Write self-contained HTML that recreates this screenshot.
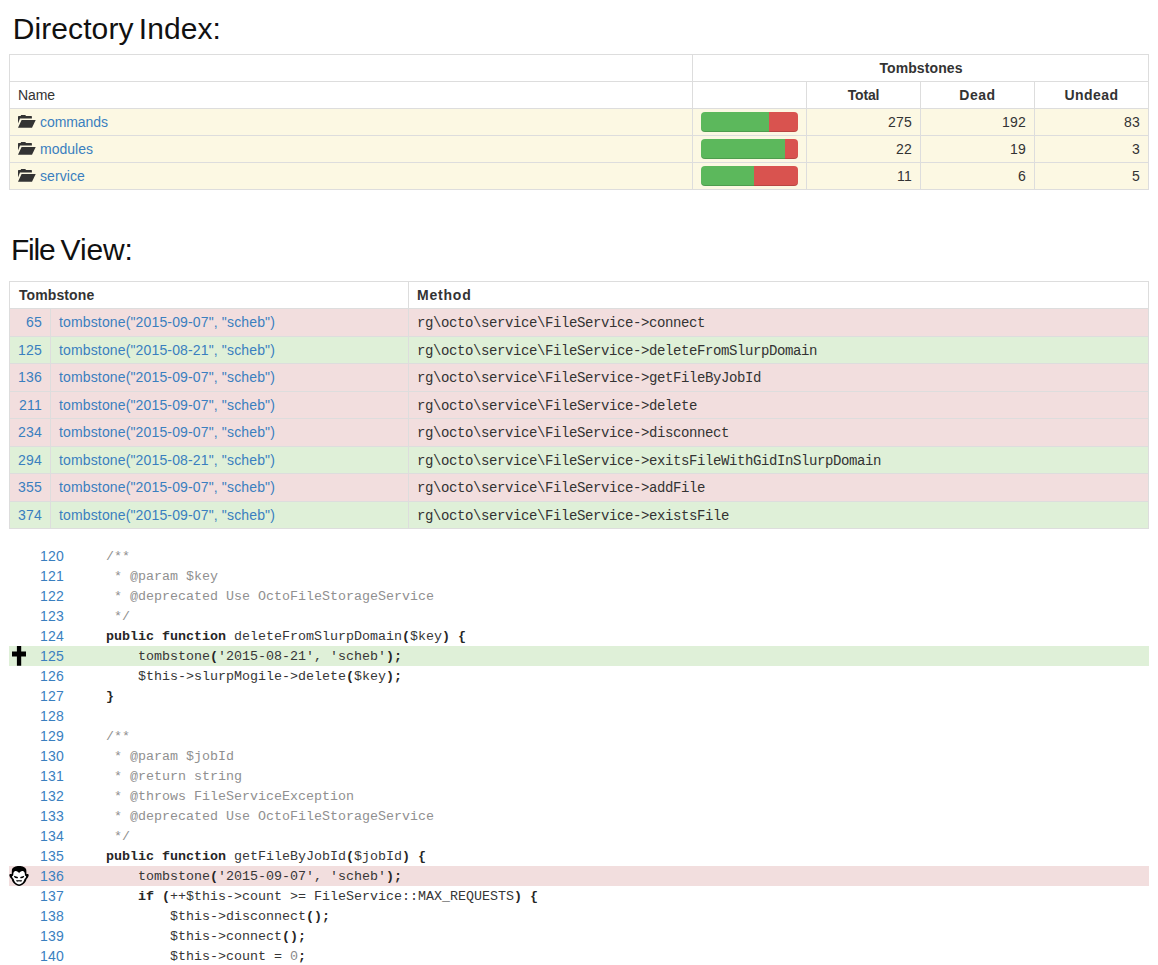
<!DOCTYPE html>
<html><head><meta charset="utf-8"><title>Tombstones</title>
<style>
html,body{margin:0;padding:0;background:#fff;}
body{width:1158px;height:965px;position:relative;overflow:hidden;font-family:"Liberation Sans",sans-serif;font-size:14px;line-height:20px;color:#333;}
.a{position:absolute;white-space:pre;}
.h{position:absolute;font-size:30px;line-height:36px;color:#111;white-space:pre;transform-origin:0 0;}
.hl{position:absolute;height:1px;background:#ddd;}
.vl{position:absolute;width:1px;background:#ddd;}
.bg{position:absolute;}
.b{font-weight:bold;}
.r{text-align:right;}
.c{text-align:center;}
.lk{color:#3a7fbf;}
.pb{position:absolute;height:20px;width:97px;display:flex;}
.pb i{display:block;height:20px;background:#5cb85c;box-shadow:inset 0 -1px 0 rgba(0,0,0,.15);border-radius:4px 0 0 4px;flex:none;}
.pb u{display:block;height:20px;background:#d9534f;box-shadow:inset 0 -1px 0 rgba(0,0,0,.15);border-radius:0 4px 4px 0;flex:1;}
.m{font-family:"Liberation Mono",monospace;font-size:14px;letter-spacing:-0.4px;color:#333;}
.ln{position:absolute;left:20px;width:44px;text-align:right;color:#3a7fbf;height:20px;}
.cd{position:absolute;left:74px;font-family:"Liberation Mono",monospace;font-size:12px;transform:scaleX(1.11111);transform-origin:0 0;line-height:20px;height:20px;white-space:pre;color:#363636;}
.cd b{color:#262626;}
.cd i{font-style:normal;color:#8a8a8a;}
.cm{color:#909090;}
svg{position:absolute;overflow:visible;}
</style></head><body>

<div class="h" style="left:12.8px;top:10.5px;letter-spacing:0.08px;">Directory</div>
<div class="h" style="left:138.8px;top:10.5px;letter-spacing:0.07px;">Index:</div>
<div class="h" style="left:10.9px;top:231.5px;letter-spacing:-1.2px;">File</div>
<div class="h" style="left:60.6px;top:231.5px;letter-spacing:-0.15px;">View:</div>
<div class="bg" style="left:9px;top:108px;width:1140px;height:81px;background:#fcf8e3;"></div>
<div class="hl" style="left:9px;top:54px;width:1140px;"></div>
<div class="hl" style="left:9px;top:81px;width:1140px;"></div>
<div class="hl" style="left:9px;top:108px;width:1140px;"></div>
<div class="hl" style="left:9px;top:135px;width:1140px;"></div>
<div class="hl" style="left:9px;top:162px;width:1140px;"></div>
<div class="hl" style="left:9px;top:189px;width:1140px;"></div>
<div class="vl" style="left:9px;top:54px;height:136px;"></div>
<div class="vl" style="left:1148px;top:54px;height:136px;"></div>
<div class="vl" style="left:692px;top:54px;height:136px;"></div>
<div class="vl" style="left:806px;top:81px;height:109px;"></div>
<div class="vl" style="left:920px;top:81px;height:109px;"></div>
<div class="vl" style="left:1034px;top:81px;height:109px;"></div>
<div class="a b c" style="left:693.5px;top:58px;letter-spacing:0.100px;width:455px;">Tombstones</div>
<div class="a " style="left:18px;top:85px;letter-spacing:-0.086px;">Name</div>
<div class="a b c" style="left:807px;top:85px;letter-spacing:-0.200px;width:113px;">Total</div>
<div class="a b c" style="left:921px;top:85px;letter-spacing:0.530px;width:113px;">Dead</div>
<div class="a b c" style="left:1035px;top:85px;letter-spacing:0.460px;width:113px;">Undead</div>
<svg style="left:18px;top:115px;" width="18" height="13" viewBox="0 0 18 13"><path fill="#333" d="M0,1.7 Q0,1 .7,1 L2.6,1 L3.1,0 L7.4,0 L7.9,1 L13.3,1 Q13.9,1 13.9,1.6 L13.9,3.6 L2,3.6 L0,8.6 Z"/><path fill="#333" d="M3.6,5 L17.7,5 L14,12.8 L0,12.8 Z"/></svg>
<div class="a lk" style="left:40px;top:112px;letter-spacing:-0.059px;">commands</div>
<div class="pb" style="left:701px;top:112px;"><i style="width:69.82%"></i><u></u></div>
<div class="a r" style="left:807px;top:112px;letter-spacing:0.214px;width:105px;">275</div>
<div class="a r" style="left:921px;top:112px;letter-spacing:0.214px;width:105px;">192</div>
<div class="a r" style="left:1035px;top:112px;letter-spacing:0.214px;width:105px;">83</div>
<svg style="left:18px;top:142px;" width="18" height="13" viewBox="0 0 18 13"><path fill="#333" d="M0,1.7 Q0,1 .7,1 L2.6,1 L3.1,0 L7.4,0 L7.9,1 L13.3,1 Q13.9,1 13.9,1.6 L13.9,3.6 L2,3.6 L0,8.6 Z"/><path fill="#333" d="M3.6,5 L17.7,5 L14,12.8 L0,12.8 Z"/></svg>
<div class="a lk" style="left:40px;top:139px;letter-spacing:0.012px;">modules</div>
<div class="pb" style="left:701px;top:139px;"><i style="width:86.36%"></i><u></u></div>
<div class="a r" style="left:807px;top:139px;letter-spacing:0.214px;width:105px;">22</div>
<div class="a r" style="left:921px;top:139px;letter-spacing:0.214px;width:105px;">19</div>
<div class="a r" style="left:1035px;top:139px;letter-spacing:0.214px;width:105px;">3</div>
<svg style="left:18px;top:169px;" width="18" height="13" viewBox="0 0 18 13"><path fill="#333" d="M0,1.7 Q0,1 .7,1 L2.6,1 L3.1,0 L7.4,0 L7.9,1 L13.3,1 Q13.9,1 13.9,1.6 L13.9,3.6 L2,3.6 L0,8.6 Z"/><path fill="#333" d="M3.6,5 L17.7,5 L14,12.8 L0,12.8 Z"/></svg>
<div class="a lk" style="left:40px;top:166px;letter-spacing:0.094px;">service</div>
<div class="pb" style="left:701px;top:166px;"><i style="width:54.55%"></i><u></u></div>
<div class="a r" style="left:807px;top:166px;letter-spacing:0.214px;width:105px;">11</div>
<div class="a r" style="left:921px;top:166px;letter-spacing:0.214px;width:105px;">6</div>
<div class="a r" style="left:1035px;top:166px;letter-spacing:0.214px;width:105px;">5</div>
<div class="bg" style="left:9px;top:308px;width:1140px;height:28px;background:#f2dede;"></div>
<div class="bg" style="left:9px;top:336px;width:1140px;height:27px;background:#dff0d8;"></div>
<div class="bg" style="left:9px;top:363px;width:1140px;height:28px;background:#f2dede;"></div>
<div class="bg" style="left:9px;top:391px;width:1140px;height:27px;background:#f2dede;"></div>
<div class="bg" style="left:9px;top:418px;width:1140px;height:28px;background:#f2dede;"></div>
<div class="bg" style="left:9px;top:446px;width:1140px;height:27px;background:#dff0d8;"></div>
<div class="bg" style="left:9px;top:473px;width:1140px;height:28px;background:#f2dede;"></div>
<div class="bg" style="left:9px;top:501px;width:1140px;height:27px;background:#dff0d8;"></div>
<div class="hl" style="left:9px;top:281px;width:1140px;"></div>
<div class="hl" style="left:9px;top:308px;width:1140px;"></div>
<div class="hl" style="left:9px;top:336px;width:1140px;"></div>
<div class="hl" style="left:9px;top:363px;width:1140px;"></div>
<div class="hl" style="left:9px;top:391px;width:1140px;"></div>
<div class="hl" style="left:9px;top:418px;width:1140px;"></div>
<div class="hl" style="left:9px;top:446px;width:1140px;"></div>
<div class="hl" style="left:9px;top:473px;width:1140px;"></div>
<div class="hl" style="left:9px;top:501px;width:1140px;"></div>
<div class="hl" style="left:9px;top:528px;width:1140px;"></div>
<div class="vl" style="left:9px;top:281px;height:248px;"></div>
<div class="vl" style="left:1148px;top:281px;height:248px;"></div>
<div class="vl" style="left:408px;top:281px;height:248px;"></div>
<div class="vl" style="left:50px;top:308px;height:221px;"></div>
<div class="a b" style="left:19px;top:285px;letter-spacing:0.100px;">Tombstone</div>
<div class="a b" style="left:417px;top:285px;letter-spacing:0.800px;">Method</div>
<div class="a r lk" style="left:10px;top:312px;letter-spacing:0.214px;width:32px;">65</div>
<div class="a lk" style="left:59px;top:312px;letter-spacing:0.146px;">tombstone(&quot;2015-09-07&quot;, &quot;scheb&quot;)</div>
<div class="a m" style="left:417px;top:313px;">rg\octo\service\FileService-&gt;connect</div>
<div class="a r lk" style="left:10px;top:340px;letter-spacing:0.214px;width:32px;">125</div>
<div class="a lk" style="left:59px;top:340px;letter-spacing:0.146px;">tombstone(&quot;2015-08-21&quot;, &quot;scheb&quot;)</div>
<div class="a m" style="left:417px;top:341px;">rg\octo\service\FileService-&gt;deleteFromSlurpDomain</div>
<div class="a r lk" style="left:10px;top:367px;letter-spacing:0.214px;width:32px;">136</div>
<div class="a lk" style="left:59px;top:367px;letter-spacing:0.146px;">tombstone(&quot;2015-09-07&quot;, &quot;scheb&quot;)</div>
<div class="a m" style="left:417px;top:368px;">rg\octo\service\FileService-&gt;getFileByJobId</div>
<div class="a r lk" style="left:10px;top:395px;letter-spacing:0.214px;width:32px;">211</div>
<div class="a lk" style="left:59px;top:395px;letter-spacing:0.146px;">tombstone(&quot;2015-09-07&quot;, &quot;scheb&quot;)</div>
<div class="a m" style="left:417px;top:396px;">rg\octo\service\FileService-&gt;delete</div>
<div class="a r lk" style="left:10px;top:422px;letter-spacing:0.214px;width:32px;">234</div>
<div class="a lk" style="left:59px;top:422px;letter-spacing:0.146px;">tombstone(&quot;2015-09-07&quot;, &quot;scheb&quot;)</div>
<div class="a m" style="left:417px;top:423px;">rg\octo\service\FileService-&gt;disconnect</div>
<div class="a r lk" style="left:10px;top:450px;letter-spacing:0.214px;width:32px;">294</div>
<div class="a lk" style="left:59px;top:450px;letter-spacing:0.146px;">tombstone(&quot;2015-08-21&quot;, &quot;scheb&quot;)</div>
<div class="a m" style="left:417px;top:451px;">rg\octo\service\FileService-&gt;exitsFileWithGidInSlurpDomain</div>
<div class="a r lk" style="left:10px;top:477px;letter-spacing:0.214px;width:32px;">355</div>
<div class="a lk" style="left:59px;top:477px;letter-spacing:0.146px;">tombstone(&quot;2015-09-07&quot;, &quot;scheb&quot;)</div>
<div class="a m" style="left:417px;top:478px;">rg\octo\service\FileService-&gt;addFile</div>
<div class="a r lk" style="left:10px;top:505px;letter-spacing:0.214px;width:32px;">374</div>
<div class="a lk" style="left:59px;top:505px;letter-spacing:0.146px;">tombstone(&quot;2015-09-07&quot;, &quot;scheb&quot;)</div>
<div class="a m" style="left:417px;top:506px;">rg\octo\service\FileService-&gt;existsFile</div>
<div class="bg" style="left:9px;top:646px;width:1140px;height:20px;background:#dff0d8;"></div>
<div class="bg" style="left:9px;top:866px;width:1140px;height:20px;background:#f2dede;"></div>
<div class="ln" style="top:546px;letter-spacing:0.214px;">120</div>
<div class="cd" style="top:547px;"><span class="cm">    /**</span></div>
<div class="ln" style="top:566px;letter-spacing:0.214px;">121</div>
<div class="cd" style="top:567px;"><span class="cm">     * @param $key</span></div>
<div class="ln" style="top:586px;letter-spacing:0.214px;">122</div>
<div class="cd" style="top:587px;"><span class="cm">     * @deprecated Use OctoFileStorageService</span></div>
<div class="ln" style="top:606px;letter-spacing:0.214px;">123</div>
<div class="cd" style="top:607px;"><span class="cm">     */</span></div>
<div class="ln" style="top:626px;letter-spacing:0.214px;">124</div>
<div class="cd" style="top:627px;">    <b>public function</b> deleteFromSlurpDomain<b>(</b>$key<b>) {</b></div>
<div class="ln" style="top:646px;letter-spacing:0.214px;">125</div>
<div class="cd" style="top:647px;">        tombstone<b>(</b>'2015-08-21', 'scheb'<b>);</b></div>
<div class="ln" style="top:666px;letter-spacing:0.214px;">126</div>
<div class="cd" style="top:667px;">        $this-&gt;slurpMogile-&gt;delete<b>(</b>$key<b>);</b></div>
<div class="ln" style="top:686px;letter-spacing:0.214px;">127</div>
<div class="cd" style="top:687px;">    <b>}</b></div>
<div class="ln" style="top:706px;letter-spacing:0.214px;">128</div>
<div class="ln" style="top:726px;letter-spacing:0.214px;">129</div>
<div class="cd" style="top:727px;"><span class="cm">    /**</span></div>
<div class="ln" style="top:746px;letter-spacing:0.214px;">130</div>
<div class="cd" style="top:747px;"><span class="cm">     * @param $jobId</span></div>
<div class="ln" style="top:766px;letter-spacing:0.214px;">131</div>
<div class="cd" style="top:767px;"><span class="cm">     * @return string</span></div>
<div class="ln" style="top:786px;letter-spacing:0.214px;">132</div>
<div class="cd" style="top:787px;"><span class="cm">     * @throws FileServiceException</span></div>
<div class="ln" style="top:806px;letter-spacing:0.214px;">133</div>
<div class="cd" style="top:807px;"><span class="cm">     * @deprecated Use OctoFileStorageService</span></div>
<div class="ln" style="top:826px;letter-spacing:0.214px;">134</div>
<div class="cd" style="top:827px;"><span class="cm">     */</span></div>
<div class="ln" style="top:846px;letter-spacing:0.214px;">135</div>
<div class="cd" style="top:847px;">    <b>public function</b> getFileByJobId<b>(</b>$jobId<b>) {</b></div>
<div class="ln" style="top:866px;letter-spacing:0.214px;">136</div>
<div class="cd" style="top:867px;">        tombstone<b>(</b>'2015-09-07', 'scheb'<b>);</b></div>
<div class="ln" style="top:886px;letter-spacing:0.214px;">137</div>
<div class="cd" style="top:887px;">        <b>if (</b>++$this-&gt;count &gt;= FileService::MAX_REQUESTS<b>) {</b></div>
<div class="ln" style="top:906px;letter-spacing:0.214px;">138</div>
<div class="cd" style="top:907px;">            $this-&gt;disconnect<b>();</b></div>
<div class="ln" style="top:926px;letter-spacing:0.214px;">139</div>
<div class="cd" style="top:927px;">            $this-&gt;connect<b>();</b></div>
<div class="ln" style="top:946px;letter-spacing:0.214px;">140</div>
<div class="cd" style="top:947px;">            $this-&gt;count = <i>0</i><b>;</b></div>
<svg style="left:12px;top:646px;" width="14" height="20" viewBox="0 0 14 20"><path fill="#000" d="M4.9,0 H9.2 V5.5 H14 V10.4 H9.2 V19.8 H4.9 V10.4 H0 V5.5 H4.9 Z"/></svg>
<svg style="left:4px;top:862px;" width="30" height="28" viewBox="0 0 1034 965">
<path fill="#000" d="M520,134 C640,134 745,175 768,265 L774,425 C800,400 852,412 852,450 C852,500 815,560 778,582 C762,650 725,705 690,745 C640,800 570,830 520,830 C470,830 400,800 350,745 C315,705 278,650 262,582 C225,560 183,500 183,450 C183,412 235,400 266,425 L272,265 C295,175 400,134 520,134 Z"/>
<path fill="#fff" d="M520,392 C545,335 600,303 650,312 C700,322 720,370 720,430 C720,470 742,482 764,490 C757,540 732,568 706,588 C694,650 665,695 630,728 C595,758 550,772 520,772 C490,772 445,758 410,728 C375,695 346,650 334,588 C308,568 283,540 276,490 C298,482 320,470 320,430 C320,370 340,322 390,312 C440,303 495,335 520,392 Z"/>
<path fill="#000" d="M340,472 L480,514 L474,556 C435,574 385,560 358,526 Z M700,472 L560,514 L566,556 C605,574 655,560 682,526 Z"/>
<path fill="#3a3a3a" d="M414,620 L622,620 L590,698 L566,668 L474,668 L450,698 Z"/>
</svg>
</body></html>
